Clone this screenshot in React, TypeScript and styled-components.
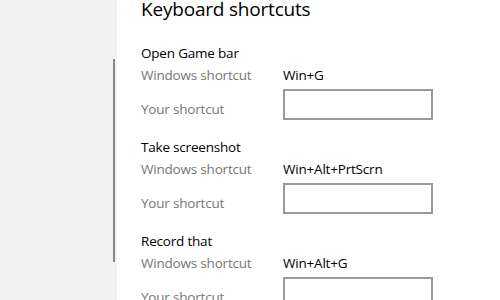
import React from "react";
import styled, { createGlobalStyle } from "styled-components";

const Global = createGlobalStyle`
  html, body { margin: 0; padding: 0; background: #ffffff; }
  body { font-family: "Open Sans", "Noto Sans", "Liberation Sans", sans-serif; }
`;

const Page = styled.div`
  display: flex;
  width: 500px;
  height: 300px;
  overflow: hidden;
  background: #ffffff;
`;

const Sidebar = styled.div`
  position: relative;
  width: 117px;
  flex: none;
  background: #f2f2f2;
`;

const ScrollThumb = styled.div`
  position: absolute;
  left: 113px;
  top: 59px;
  width: 2px;
  height: 203px;
  background: #858585;
`;

const Content = styled.div`
  flex: 1;
  padding-left: 24px;
  display: flex;
  flex-direction: column;
`;

const Title = styled.h1`
  margin: 0;
  font-size: 19px;
  font-weight: 400;
  line-height: 18px;
  color: #000;
  letter-spacing: -0.2px;
`;

const Section = styled.section<{ first?: boolean }>`
  display: flex;
  flex-direction: column;
  margin-top: ${(p) => (p.first ? "25px" : "17px")};
`;

const SectionTitle = styled.div`
  font-size: 13.5px;
  line-height: 20px;
  color: #000;
  letter-spacing: -0.2px;
`;

const Row = styled.div<{ tall?: boolean }>`
  display: grid;
  grid-template-columns: 142px 150px;
  align-items: center;
  height: ${(p) => (p.tall ? "31px" : "24px")};
  margin-top: ${(p) => (p.tall ? "2px" : "0")};
`;

const Label = styled.span<{ low?: boolean }>`
  font-size: 13.5px;
  color: #767676;
  letter-spacing: -0.2px;
  padding-top: ${(p) => (p.low ? "8px" : "0")};
`;

const Value = styled.span`
  font-size: 13.5px;
  color: #000;
  letter-spacing: -0.2px;
`;

const Input = styled.div`
  box-sizing: border-box;
  width: 150px;
  height: 31px;
  border: 2px solid #999999;
  background: #ffffff;
`;

const items = [
  { name: "Open Game bar", keys: "Win+G" },
  { name: "Take screenshot", keys: "Win+Alt+PrtScrn" },
  { name: "Record that", keys: "Win+Alt+G" },
];

export default function App() {
  return (
    <>
      <Global />
      <Page>
        <Sidebar>
          <ScrollThumb />
        </Sidebar>
        <Content>
          <Title>Keyboard shortcuts</Title>
          {items.map((it, i) => (
            <Section key={it.name} first={i === 0}>
              <SectionTitle>{it.name}</SectionTitle>
              <Row>
                <Label>Windows shortcut</Label>
                <Value>{it.keys}</Value>
              </Row>
              <Row tall>
                <Label low>Your shortcut</Label>
                <Input />
              </Row>
            </Section>
          ))}
        </Content>
      </Page>
    </>
  );
}
